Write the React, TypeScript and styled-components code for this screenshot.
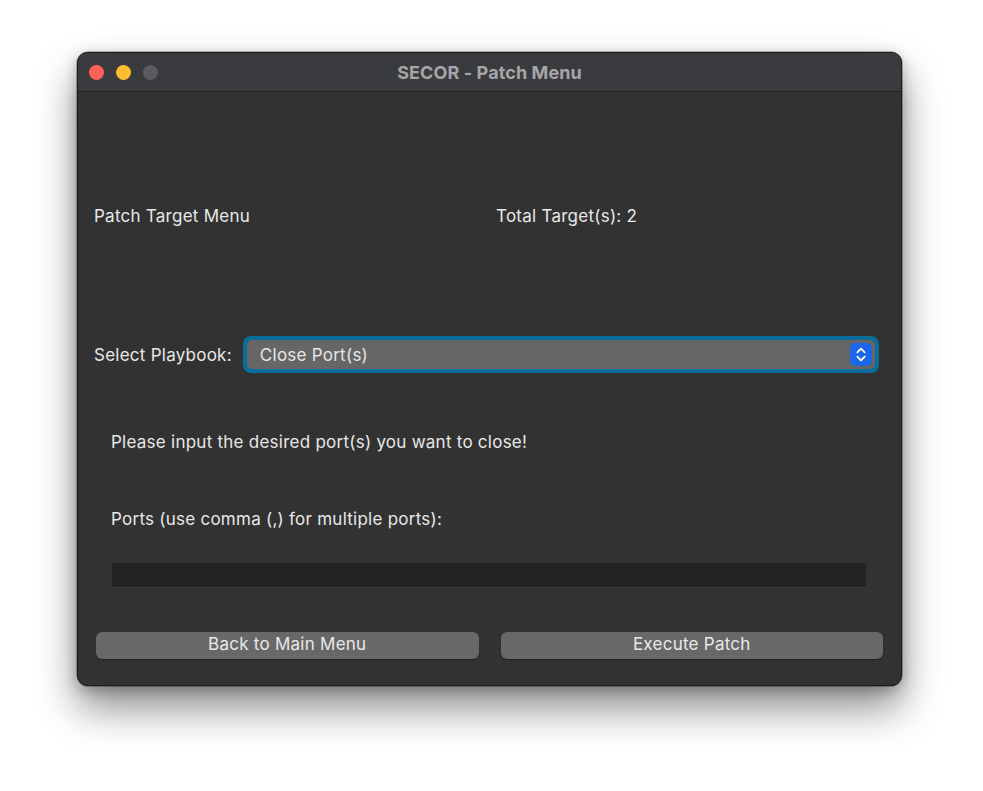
import React from "react";
import styled, { createGlobalStyle } from "styled-components";

const GlobalStyle = createGlobalStyle`
  html, body {
    margin: 0;
    background: #ffffff;
  }
  body {
    font-family: Inter, "Noto Sans", "Liberation Sans", sans-serif;
    -webkit-font-smoothing: antialiased;
  }
`;

const Stage = styled.div`
  padding: 52px 0 0 77px;
  height: 791px;
  box-sizing: border-box;
`;

const Window = styled.div`
  width: 825px;
  height: 634px;
  box-sizing: border-box;
  background: #323232;
  border-radius: 11px;
  border: 1px solid #1c1c1c;
  box-shadow: 0 0 0 0.5px rgba(0, 0, 0, 0.5), 0 22px 40px rgba(0, 0, 0, 0.45),
    0 4px 14px rgba(0, 0, 0, 0.25), inset 0 1px 0 rgba(255, 255, 255, 0.18);
  overflow: hidden;
  display: flex;
  flex-direction: column;
`;

const TitleBar = styled.div`
  height: 38px;
  flex: 0 0 auto;
  background: #3a3b3e;
  border-bottom: 1px solid #1f1f1f;
  display: flex;
  align-items: center;
  position: relative;
  padding-left: 11px;
`;

const Lights = styled.div`
  display: flex;
  gap: 12px;
`;

const Light = styled.span<{ $color: string }>`
  width: 15px;
  height: 15px;
  border-radius: 50%;
  background: ${({ $color }) => $color};
`;

const Title = styled.div`
  position: absolute;
  left: 0;
  right: 0;
  text-align: center;
  font-size: 18px;
  font-weight: 700;
  color: #a6a6a8;
  letter-spacing: 0.1px;
`;

const Content = styled.div`
  flex: 1;
  display: flex;
  flex-direction: column;
  padding: 0 18px 0 16px;
`;

const HeaderRow = styled.div`
  margin-top: 114px;
  height: 20px;
  display: grid;
  grid-template-columns: 402px 1fr;
  align-items: center;
`;

const Label = styled.span<{ $indent?: boolean }>`
  font-size: 17px;
  letter-spacing: 0.25px;
  color: #e8e8e8;
  white-space: nowrap;
  padding-left: ${({ $indent }) => ($indent ? "17px" : "0")};
`;

const SelectRow = styled.div`
  margin-top: 110px;
  display: flex;
  align-items: center;
  height: 37px;
  gap: 11px;
`;

const SelectRing = styled.div`
  flex: 1;
  height: 37px;
  box-sizing: border-box;
  border-radius: 8px;
  background: #0b6e9a;
  padding: 4px;
  margin-right: 4px;
`;

const SelectField = styled.div`
  height: 100%;
  box-sizing: border-box;
  background: #666666;
  border-radius: 5px;
  display: flex;
  align-items: center;
  justify-content: space-between;
  padding: 0 3px 0 13px;
  font-size: 17px;
  letter-spacing: 0.25px;
  color: #e6e6e6;
`;

const Stepper = styled.span`
  width: 22px;
  height: 23px;
  border-radius: 5px;
  background: #1b67ea;
  display: flex;
  align-items: center;
  justify-content: center;
`;

const TextRow = styled.div<{ $gap: number; $height: number }>`
  margin-top: ${({ $gap }) => $gap}px;
  height: ${({ $height }) => $height}px;
  display: flex;
  align-items: center;
`;

const PortInput = styled.div`
  margin: 34px 17px 0 18px;
  height: 25px;
  background: #232323;
  border-bottom: 1px solid #3b3b3b;
  box-sizing: border-box;
`;

const ButtonRow = styled.div`
  margin-top: 44px;
  padding-left: 2px;
  display: grid;
  grid-template-columns: 1fr 1fr;
  gap: 22px;
`;

const Button = styled.button`
  height: 27px;
  border: none;
  border-radius: 6px;
  background: #686868;
  color: #e8e8e8;
  font-family: inherit;
  font-size: 17px;
  letter-spacing: 0.25px;
  line-height: 25px;
  padding: 0 0 2px;
  box-shadow: 0 0.5px 1px rgba(0, 0, 0, 0.35);
`;

const Chevrons = () => (
  <svg width="12" height="17" viewBox="0 0 12 17" fill="none">
    <path
      d="M2.3 6.3 L6 2.6 L9.7 6.3 M2.3 10.7 L6 14.4 L9.7 10.7"
      stroke="#ffffff"
      strokeWidth="1.8"
      strokeLinecap="round"
      strokeLinejoin="round"
    />
  </svg>
);

const App: React.FC = () => (
  <Stage>
    <GlobalStyle />
    <Window>
      <TitleBar>
        <Lights>
          <Light $color="#fe5f57" />
          <Light $color="#febc2e" />
          <Light $color="#5b5c60" />
        </Lights>
        <Title>SECOR - Patch Menu</Title>
      </TitleBar>
      <Content>
        <HeaderRow>
          <Label>Patch Target Menu</Label>
          <Label>Total Target(s): 2</Label>
        </HeaderRow>
        <SelectRow>
          <Label>Select Playbook:</Label>
          <SelectRing>
            <SelectField>
              Close Port(s)
              <Stepper>
                <Chevrons />
              </Stepper>
            </SelectField>
          </SelectRing>
        </SelectRow>
        <TextRow $gap={59} $height={20}>
          <Label $indent>Please input the desired port(s) you want to close!</Label>
        </TextRow>
        <TextRow $gap={57} $height={20}>
          <Label $indent>Ports (use comma (,) for multiple ports):</Label>
        </TextRow>
        <PortInput />
        <ButtonRow>
          <Button>Back to Main Menu</Button>
          <Button>Execute Patch</Button>
        </ButtonRow>
      </Content>
    </Window>
  </Stage>
);

export default App;
